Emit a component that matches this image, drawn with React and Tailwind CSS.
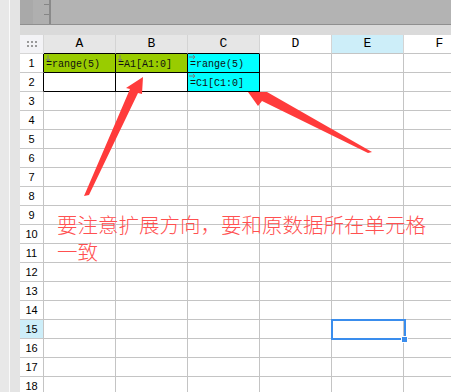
import React from "react";

const cols = ["A", "B", "C", "D", "E", "F"];
const rows = Array.from({ length: 18 }, (_, i) => i + 1);

const cells = {
  "1A": { text: "=range(5)", bg: "bg-[#99cc00]", mark: "down" },
  "1B": { text: "=A1[A1:0]", bg: "bg-[#99cc00]", mark: "down" },
  "1C": { text: "=range(5)", bg: "bg-[#00ffff]", mark: "right" },
  "2C": { text: "=C1[C1:0]", bg: "bg-[#00ffff]", mark: "right" },
};

const DownMark = () => (
  <svg className="absolute left-[1px] top-[1px]" width="6" height="7" viewBox="0 0 6 7">
    <path d="M3 0 V6 M1 4 L3 6 L5 4" stroke="#7a7a7a" strokeWidth="1" fill="none" />
  </svg>
);

const RightMark = () => (
  <svg className="absolute left-[1px] top-[1px]" width="7" height="5" viewBox="0 0 7 5">
    <path d="M0 2 H6 M4 0 L6 2 L4 4" stroke="#7a7a7a" strokeWidth="1" fill="none" />
  </svg>
);

const Cell = ({ r, c }) => {
  const key = `${r}${c}`;
  const data = cells[key];
  const boxed = r <= 2 && (c === "A" || c === "B" || c === "C");
  const selected = r === 15 && c === "E";
  const bg = data ? data.bg : "bg-white";
  return (
    <div
      className={`relative border-r border-b ${
        boxed ? "border-black" : "border-[#c4c4c4]"
      } ${bg} ${selected ? "z-10" : ""}`}
    >
      {data && data.mark === "down" && <DownMark />}
      {data && data.mark === "right" && <RightMark />}
      {data && (
        <div className="pl-[2px] pt-[5px] leading-[12px] text-[10px] text-[#111] font-['Liberation_Mono',monospace] whitespace-nowrap">
          {data.text}
        </div>
      )}
      {selected && (
        <>
          <div className="absolute -left-[1px] -top-[1px] w-[75px] h-[21px] border-2 border-[#3a8ded]" />
          <div className="absolute left-[69px] top-[16px] w-[7px] h-[7px] bg-[#3a8ded] border border-white" />
        </>
      )}
    </div>
  );
};

const App = () => {
  return (
    <div className="relative w-[451px] h-[392px] overflow-hidden flex bg-white">
      {/* left strip */}
      <div className="flex h-full shrink-0">
        <div className="w-[9px] bg-[#e8e8e8]" />
        <div className="w-[1px] bg-[#fafafa]" />
        <div className="w-[10px] bg-[#e4e4e4]" />
      </div>

      <div className="flex flex-col flex-1 min-w-0">
        {/* top bar */}
        <div className="flex h-[25px] border-b border-[#8f8f8f] shrink-0">
          <div className="w-[13px] bg-[#a9a9a9]" />
          <div className="w-[16px] bg-[#afafaf] flex flex-col items-end pt-[4px] gap-[9px]">
            <div className="w-[5px] h-[1px] bg-[#858585]" />
            <div className="w-[5px] h-[1px] bg-[#858585]" />
          </div>
          <div className="w-[2px] bg-[#8a8a8a]" />
          <div className="flex-1 bg-[#b3b3b3]" />
        </div>
        <div className="h-[10px] bg-[#dadada] shrink-0" />

        {/* grid */}
        <div className="grid grid-cols-[24px_repeat(6,72px)] auto-rows-[19px] w-max">
          <div className="bg-[#f3f3f6] border-r border-b border-[#d6d6d6] grid grid-cols-[repeat(3,2px)] gap-[2px] content-center justify-center">
            {Array.from({ length: 6 }).map((_, i) => (
              <div key={i} className="w-[2px] h-[2px] bg-[#9a9a9a]" />
            ))}
          </div>
          {cols.map((c) => (
            <div
              key={c}
              className={`flex items-center justify-center border-r border-[#d4d4d4] border-b text-[13px] text-black font-['Liberation_Mono',monospace] ${
                c === "A" || c === "B" || c === "C"
                  ? "bg-[#e6e6e6] border-b-black"
                  : c === "E"
                  ? "bg-[#cdeef9] border-b-[#c4c4c4]"
                  : "bg-white border-b-[#c4c4c4]"
              }`}
            >
              {c}
            </div>
          ))}

          {rows.map((r) => (
            <React.Fragment key={r}>
              <div
                className={`flex items-center justify-center border-b border-r border-b-[#c8c8c8] text-[11px] text-black font-['Liberation_Sans',sans-serif] ${
                  r <= 2 ? "border-r-black" : "border-r-[#c4c4c4]"
                } ${r === 15 ? "bg-[#cdeef9]" : "bg-white"}`}
              >
                {r}
              </div>
              {cols.map((c) => (
                <Cell key={c} r={r} c={c} />
              ))}
            </React.Fragment>
          ))}
        </div>
      </div>

      {/* annotation arrows */}
      <svg className="absolute left-0 top-0 pointer-events-none" width="451" height="392">
        <polygon
          points="84,196 130,89 126,88 143,77 142,94 138,93 89,195"
          fill="#ff3b3b"
        />
        <polygon
          points="248,92 267,92 372,152 368,153 262,101 258,106"
          fill="#ff3b3b"
        />
      </svg>

      <div className="absolute left-[57px] top-[211px] w-[380px] text-[20.5px] leading-[27px] font-light text-[#ff5050] font-['Noto_Sans_CJK_SC',sans-serif]">
        要注意扩展方向，要和原数据所在单元格一致
      </div>
    </div>
  );
};

export default App;
